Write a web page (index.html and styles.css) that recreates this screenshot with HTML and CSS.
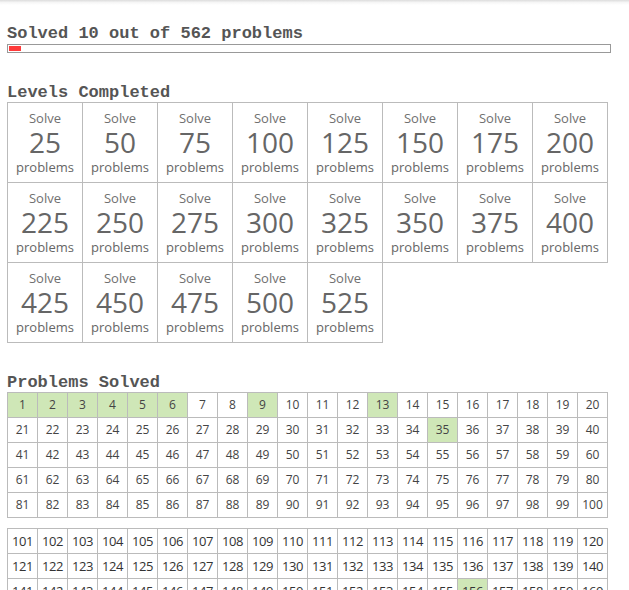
FILE: index.html
```html
<!DOCTYPE html>
<html>
<head>
<meta charset="utf-8">
<title>Progress</title>
<link rel="stylesheet" href="styles.css">
</head>
<body>
<div class="topshade"></div>
<main class="page">
  <h2 class="heading heading-first">Solved 10 out of 562 problems</h2>
  <div class="bar"><div class="bar-fill" style="width:12px"></div></div>

  <h2 class="heading heading-section">Levels Completed</h2>
  <div class="levels">
    <div class="level"><span class="lv-top">Solve</span><span class="lv-num">25</span><span class="lv-bot">problems</span></div>
    <div class="level"><span class="lv-top">Solve</span><span class="lv-num">50</span><span class="lv-bot">problems</span></div>
    <div class="level"><span class="lv-top">Solve</span><span class="lv-num">75</span><span class="lv-bot">problems</span></div>
    <div class="level"><span class="lv-top">Solve</span><span class="lv-num">100</span><span class="lv-bot">problems</span></div>
    <div class="level"><span class="lv-top">Solve</span><span class="lv-num">125</span><span class="lv-bot">problems</span></div>
    <div class="level"><span class="lv-top">Solve</span><span class="lv-num">150</span><span class="lv-bot">problems</span></div>
    <div class="level"><span class="lv-top">Solve</span><span class="lv-num">175</span><span class="lv-bot">problems</span></div>
    <div class="level"><span class="lv-top">Solve</span><span class="lv-num">200</span><span class="lv-bot">problems</span></div>
    <div class="level"><span class="lv-top">Solve</span><span class="lv-num">225</span><span class="lv-bot">problems</span></div>
    <div class="level"><span class="lv-top">Solve</span><span class="lv-num">250</span><span class="lv-bot">problems</span></div>
    <div class="level"><span class="lv-top">Solve</span><span class="lv-num">275</span><span class="lv-bot">problems</span></div>
    <div class="level"><span class="lv-top">Solve</span><span class="lv-num">300</span><span class="lv-bot">problems</span></div>
    <div class="level"><span class="lv-top">Solve</span><span class="lv-num">325</span><span class="lv-bot">problems</span></div>
    <div class="level"><span class="lv-top">Solve</span><span class="lv-num">350</span><span class="lv-bot">problems</span></div>
    <div class="level"><span class="lv-top">Solve</span><span class="lv-num">375</span><span class="lv-bot">problems</span></div>
    <div class="level"><span class="lv-top">Solve</span><span class="lv-num">400</span><span class="lv-bot">problems</span></div>
    <div class="level"><span class="lv-top">Solve</span><span class="lv-num">425</span><span class="lv-bot">problems</span></div>
    <div class="level"><span class="lv-top">Solve</span><span class="lv-num">450</span><span class="lv-bot">problems</span></div>
    <div class="level"><span class="lv-top">Solve</span><span class="lv-num">475</span><span class="lv-bot">problems</span></div>
    <div class="level"><span class="lv-top">Solve</span><span class="lv-num">500</span><span class="lv-bot">problems</span></div>
    <div class="level"><span class="lv-top">Solve</span><span class="lv-num">525</span><span class="lv-bot">problems</span></div>
  </div>

  <h2 class="heading heading-section">Problems Solved</h2>
  <div class="grid grid-a">
    <div class="cell done">1</div><div class="cell done">2</div><div class="cell done">3</div><div class="cell done">4</div><div class="cell done">5</div><div class="cell done">6</div><div class="cell">7</div><div class="cell">8</div><div class="cell done">9</div><div class="cell">10</div><div class="cell">11</div><div class="cell">12</div><div class="cell done">13</div><div class="cell">14</div><div class="cell">15</div><div class="cell">16</div><div class="cell">17</div><div class="cell">18</div><div class="cell">19</div><div class="cell">20</div>
    <div class="cell">21</div><div class="cell">22</div><div class="cell">23</div><div class="cell">24</div><div class="cell">25</div><div class="cell">26</div><div class="cell">27</div><div class="cell">28</div><div class="cell">29</div><div class="cell">30</div><div class="cell">31</div><div class="cell">32</div><div class="cell">33</div><div class="cell">34</div><div class="cell done">35</div><div class="cell">36</div><div class="cell">37</div><div class="cell">38</div><div class="cell">39</div><div class="cell">40</div>
    <div class="cell">41</div><div class="cell">42</div><div class="cell">43</div><div class="cell">44</div><div class="cell">45</div><div class="cell">46</div><div class="cell">47</div><div class="cell">48</div><div class="cell">49</div><div class="cell">50</div><div class="cell">51</div><div class="cell">52</div><div class="cell">53</div><div class="cell">54</div><div class="cell">55</div><div class="cell">56</div><div class="cell">57</div><div class="cell">58</div><div class="cell">59</div><div class="cell">60</div>
    <div class="cell">61</div><div class="cell">62</div><div class="cell">63</div><div class="cell">64</div><div class="cell">65</div><div class="cell">66</div><div class="cell">67</div><div class="cell">68</div><div class="cell">69</div><div class="cell">70</div><div class="cell">71</div><div class="cell">72</div><div class="cell">73</div><div class="cell">74</div><div class="cell">75</div><div class="cell">76</div><div class="cell">77</div><div class="cell">78</div><div class="cell">79</div><div class="cell">80</div>
    <div class="cell">81</div><div class="cell">82</div><div class="cell">83</div><div class="cell">84</div><div class="cell">85</div><div class="cell">86</div><div class="cell">87</div><div class="cell">88</div><div class="cell">89</div><div class="cell">90</div><div class="cell">91</div><div class="cell">92</div><div class="cell">93</div><div class="cell">94</div><div class="cell">95</div><div class="cell">96</div><div class="cell">97</div><div class="cell">98</div><div class="cell">99</div><div class="cell">100</div>
  </div>
  <div class="grid grid-b">
    <div class="cell">101</div><div class="cell">102</div><div class="cell">103</div><div class="cell">104</div><div class="cell">105</div><div class="cell">106</div><div class="cell">107</div><div class="cell">108</div><div class="cell">109</div><div class="cell">110</div><div class="cell">111</div><div class="cell">112</div><div class="cell">113</div><div class="cell">114</div><div class="cell">115</div><div class="cell">116</div><div class="cell">117</div><div class="cell">118</div><div class="cell">119</div><div class="cell">120</div>
    <div class="cell">121</div><div class="cell">122</div><div class="cell">123</div><div class="cell">124</div><div class="cell">125</div><div class="cell">126</div><div class="cell">127</div><div class="cell">128</div><div class="cell">129</div><div class="cell">130</div><div class="cell">131</div><div class="cell">132</div><div class="cell">133</div><div class="cell">134</div><div class="cell">135</div><div class="cell">136</div><div class="cell">137</div><div class="cell">138</div><div class="cell">139</div><div class="cell">140</div>
    <div class="cell">141</div><div class="cell">142</div><div class="cell">143</div><div class="cell">144</div><div class="cell">145</div><div class="cell">146</div><div class="cell">147</div><div class="cell">148</div><div class="cell">149</div><div class="cell">150</div><div class="cell">151</div><div class="cell">152</div><div class="cell">153</div><div class="cell">154</div><div class="cell">155</div><div class="cell done">156</div><div class="cell">157</div><div class="cell">158</div><div class="cell">159</div><div class="cell">160</div>
    <div class="cell">161</div><div class="cell">162</div><div class="cell">163</div><div class="cell">164</div><div class="cell">165</div><div class="cell">166</div><div class="cell">167</div><div class="cell">168</div><div class="cell">169</div><div class="cell">170</div><div class="cell">171</div><div class="cell">172</div><div class="cell">173</div><div class="cell">174</div><div class="cell">175</div><div class="cell">176</div><div class="cell">177</div><div class="cell">178</div><div class="cell">179</div><div class="cell">180</div>
  </div>
</main>
</body>
</html>
```

FILE: styles.css
```css
html, body {
  margin: 0;
  padding: 0;
  background: #fff;
  overflow: hidden;
}

.topshade {
  height: 5px;
  background: linear-gradient(#dcdcdc, #f6f6f6 50%, #fff);
}

.page {
  padding: 0 7px;
}

.heading {
  font-family: "Liberation Mono", "Courier New", monospace;
  font-size: 17px;
  font-weight: bold;
  color: #555;
  line-height: 18px;
  padding: 4px 0 0;
  margin: 0;
}

.heading-first {
  margin-top: 16px;
}

.heading-section {
  margin-top: 26px;
  padding-top: 5px;
}

.bar {
  box-sizing: border-box;
  width: 604px;
  height: 9px;
  margin-top: 1px;
  border: 1px solid #999;
  padding: 1px;
}

.bar-fill {
  height: 5px;
  background: #ff3b3b;
}

.levels {
  display: grid;
  grid-template-columns: repeat(8, 75px);
  width: 600px;
  border-top: 1px solid #bbb;
  border-left: 1px solid #bbb;
}

.level {
  box-sizing: border-box;
  height: 80px;
  border-right: 1px solid #bbb;
  border-bottom: 1px solid #bbb;
  padding-top: 7px;
  display: flex;
  flex-direction: column;
  align-items: center;
  font-family: "Open Sans", "DejaVu Sans", sans-serif;
  color: #666;
}

.lv-top, .lv-bot {
  font-size: 13px;
  line-height: 16px;
}

.lv-top {
  color: #707070;
}

.lv-num {
  font-size: 28px;
  line-height: 33px;
  color: #666;
}

.grid {
  display: grid;
  grid-template-columns: repeat(20, 30px);
  width: 600px;
  border-top: 1px solid #bbb;
  border-left: 1px solid #bbb;
  font-family: "Open Sans", "DejaVu Sans", sans-serif;
}

.grid-b {
  margin-top: 10px;
}

.cell {
  box-sizing: border-box;
  height: 25px;
  border-right: 1px solid #bbb;
  border-bottom: 1px solid #bbb;
  text-align: center;
  line-height: 24px;
  font-size: 12px;
  color: #444;
}

.grid-b .cell {
  font-size: 13px;
  letter-spacing: -0.4px;
  color: #333;
}

.cell.done {
  background: #cfe7b7;
}
```
